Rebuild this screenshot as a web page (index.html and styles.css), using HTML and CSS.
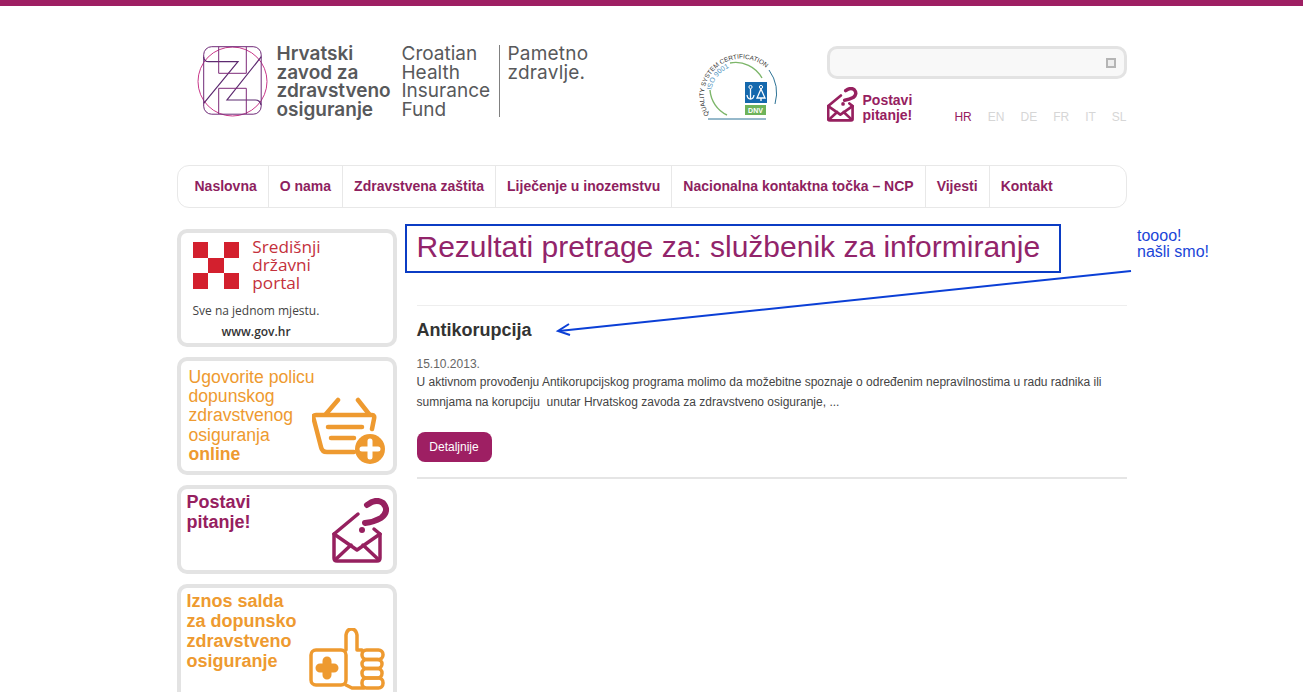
FILE: index.html
```html
<!DOCTYPE html>
<html lang="hr">
<head>
    <meta charset="UTF-8">
    <meta name="viewport" content="width=device-width, initial-scale=1.0">
    <title>Rezultati pretrage</title>
    <link rel="stylesheet" href="styles.css">
</head>
<body>
    <div class="topbar"></div>
    <div class="wrapper">
        <header class="header">
            <div class="logo">
                <svg class="logo-mark" width="72" height="76" viewBox="0 0 72 76" fill="none" stroke-width="1">
                    <circle cx="35.5" cy="36.5" r="34.5" stroke="#c9388a"/>
                    <rect x="6.7" y="1.7" width="57.5" height="67.5" rx="8" stroke="#6f2a78"/>
                    <path d="M6.7 11.7 Q7 16.7 11.7 16.7 H41 L6.7 58.3" stroke="#5d2a70" stroke-width="1.2"/>
                    <path d="M21.7 1.7 V28.3 H49.3 V1.7" stroke="#7d2a78"/>
                    <path d="M64.3 11.7 L30 55 H58.3 Q63 55 64 60" stroke="#5d2a70" stroke-width="1.2"/>
                    <path d="M21.7 69 V43.3 H49.3 V69" stroke="#7d2a78"/>
                </svg>
                <div class="logo-name">Hrvatski<br>zavod za<br>zdravstveno<br>osiguranje</div>
                <div class="logo-english">Croatian<br>Health<br>Insurance<br>Fund</div>
                <div class="logo-motto">Pametno<br>zdravlje.</div>
            </div>
            <svg class="cert" width="82" height="76" viewBox="0 0 82 76">
                <defs>
                    <path id="certArc" d="M12 67 A37.5 37.5 0 1 1 81 40"/>
                    <path id="isoArc" d="M14.5 42 A30 30 0 0 1 44 17"/>
                </defs>
                <text class="cert-text"><textPath href="#certArc">QUALITY SYSTEM CERTIFICATION</textPath></text>
                <text class="cert-iso"><textPath href="#isoArc">ISO 9001</textPath></text>
                <path d="M33 15 A30 30 0 0 1 65 30" fill="none" stroke="#7db66a" stroke-width="1.4"/>
                <path d="M13 42 A30 30 0 0 0 30 67" fill="none" stroke="#7db66a" stroke-width="1.4"/>
                <path d="M72 22 A40 40 0 0 1 78 56" fill="none" stroke="#2d7396" stroke-width="1"/>
                <rect x="48" y="34" width="22" height="21" fill="#1468ad"/>
                <circle cx="53.5" cy="39" r="1.6" fill="none" stroke="#fff"/>
                <path d="M53.5 41 V51 M50 47 Q50.5 51 53.5 51 Q56.5 51 57 47" fill="none" stroke="#fff" stroke-width="1.3"/>
                <circle cx="64" cy="39" r="1.6" fill="none" stroke="#fff"/>
                <path d="M64 41 L60 50 H68 Z M64 50 V53" fill="none" stroke="#fff" stroke-width="1.3"/>
                <rect x="48" y="57" width="21" height="10" fill="#6eb35a"/>
                <text class="cert-dnv" x="58.5" y="65">DNV</text>
                <path d="M11 71 H69" stroke="#2d7396" stroke-width="1"/>
            </svg>
            <div class="tools">
                <div class="search"><span class="search-btn"></span></div>
                <div class="tools-row">
                    <a class="ask">
                        <svg width="31" height="35" viewBox="0 0 58 66" fill="none" stroke="#96205f" stroke-width="5" stroke-linejoin="round" stroke-linecap="round">
                            <path d="M26 16 L2 36 V60 Q2 63 5 63 H45 Q48 63 48 60 V36 L42 31"/>
                            <path d="M2 36 L25 52 L48 36 M3 62 L19 47 M47 62 L31 47"/>
                            <path d="M35 7 Q44 0 51 5 Q58 13 49 20 Q42 24 33 25" stroke-width="6.5"/>
                            <circle cx="30" cy="32" r="3.5" fill="#96205f" stroke="none"/>
                        </svg>
                        <span>Postavi<br>pitanje!</span>
                    </a>
                    <ul class="langs">
                        <li class="active">HR</li>
                        <li>EN</li>
                        <li>DE</li>
                        <li>FR</li>
                        <li>IT</li>
                        <li>SL</li>
                    </ul>
                </div>
            </div>
        </header>

        <nav class="nav">
            <a>Naslovna</a>
            <a>O nama</a>
            <a>Zdravstvena zaštita</a>
            <a>Liječenje u inozemstvu</a>
            <a>Nacionalna kontaktna točka – NCP</a>
            <a>Vijesti</a>
            <a>Kontakt</a>
        </nav>

        <div class="content">
            <aside class="sidebar">
                <div class="banner banner-gov">
                    <div class="gov-top">
                        <div class="checker">
                            <span></span><i></i><span></span>
                            <i></i><span></span><i></i>
                            <span></span><i></i><span></span>
                        </div>
                        <div class="gov-name">Središnji<br>državni<br>portal</div>
                    </div>
                    <div class="gov-slogan">Sve na jednom mjestu.</div>
                    <div class="gov-url">www.gov.hr</div>
                </div>
                <div class="banner banner-policy">
                    <div class="banner-text orange">Ugovorite policu<br>dopunskog<br>zdravstvenog<br>osiguranja<br><b>online</b></div>
                    <svg class="banner-icon" width="73" height="68" viewBox="0 0 73 68" fill="none" stroke="#ee9a30" stroke-width="4.5" stroke-linecap="round" stroke-linejoin="round">
                        <path d="M4 18 H60 Q63 18 62 22 L60 32 M4 18 Q0 18 2 23 L9 50 Q10 55 15 55 H42"/>
                        <path d="M14 17 L26 3 M46 3 L57 17"/>
                        <path d="M16 30 H50 M19 41 H42"/>
                        <circle cx="58" cy="52" r="15" fill="#ee9a30" stroke="none"/>
                        <path d="M58 44 V60 M50 52 H66" stroke="#fff" stroke-width="5"/>
                    </svg>
                </div>
                <div class="banner banner-ask">
                    <div class="banner-text purple"><b>Postavi<br>pitanje!</b></div>
                    <svg class="banner-icon" width="58" height="66" viewBox="0 0 58 66" fill="none" stroke="#96205f" stroke-width="3.5" stroke-linejoin="round" stroke-linecap="round">
                        <path d="M26 16 L2 36 V60 Q2 63 5 63 H45 Q48 63 48 60 V36 L42 31"/>
                        <path d="M2 36 L25 52 L48 36 M3 62 L19 47 M47 62 L31 47"/>
                        <path d="M35 7 Q44 0 51 5 Q58 13 49 20 Q42 24 33 25" stroke-width="6"/>
                        <circle cx="30" cy="32" r="3" fill="#96205f" stroke="none"/>
                    </svg>
                </div>
                <div class="banner banner-saldo">
                    <div class="banner-text orange"><b>Iznos salda<br>za dopunsko<br>zdravstveno<br>osiguranje</b></div>
                    <svg class="banner-icon" width="78" height="64" viewBox="0 0 78 64" fill="none" stroke="#ee9a30" stroke-width="3.5" stroke-linejoin="round" stroke-linecap="round">
                        <rect x="2" y="22" width="35" height="35" rx="5"/>
                        <path d="M37 22 V7 Q38 1 42.5 1 Q47 1 48 7 V22 H53 M37 57 L43 60 H55"/>
                        <rect x="53" y="22" width="21" height="9.5" rx="4.5"/>
                        <rect x="53" y="31.5" width="20" height="9" rx="4.5"/>
                        <rect x="53" y="40.5" width="20" height="9.5" rx="4.5"/>
                        <rect x="53" y="50" width="21" height="10" rx="4.5"/>
                        <path d="M18 33 V47 M11 40 H25" stroke-width="9"/>
                    </svg>
                </div>
            </aside>

            <main class="main">
                <h1 class="page-title">Rezultati pretrage za: službenik za informiranje</h1>
                <article class="result">
                    <h2>Antikorupcija</h2>
                    <div class="date">15.10.2013.</div>
                    <p>U aktivnom provođenju Antikorupcijskog programa molimo da možebitne spoznaje o određenim nepravilnostima u radu radnika ili sumnjama na korupciju&nbsp; unutar Hrvatskog zavoda za zdravstveno osiguranje, ...</p>
                    <a class="btn">Detaljnije</a>
                </article>
            </main>
        </div>
    </div>

    <!-- oznake preko stranice -->
    <div class="note-box"></div>
    <div class="note-text">toooo!<br>našli smo!</div>
    <svg class="note-arrow" width="600" height="80" viewBox="0 0 600 80" fill="none" stroke="#0b3fd6" stroke-width="2">
        <path d="M576 3 L4 63"/>
        <path d="M14 56 L3 63 L15 67" stroke-width="2"/>
    </svg>
</body>
</html>
```

FILE: styles.css
```css
* {
    box-sizing: border-box;
}

html, body {
    height: 100%;
    overflow: hidden;
}

body {
    margin: 0;
    font-family: "Liberation Sans", Arial, sans-serif;
    color: #444;
    background: #fff;
    position: relative;
}

.topbar {
    height: 6px;
    background: #9e1f63;
}

.wrapper {
    width: 950px;
    margin: 0 auto;
}

.header {
    display: flex;
    height: 159px;
    position: relative;
}

.logo {
    display: flex;
    width: 520px;
    padding: 39px 0 0 20px;
    font-family: "Inter", sans-serif;
    font-size: 19px;
    line-height: 18.7px;
    color: #58595b;
}

.logo-mark {
    flex: none;
    margin-right: 8px;
}

.logo-name {
    width: 125px;
    font-weight: 600;
}

.logo-english {
    width: 98px;
    height: 72px;
    border-right: 1px solid #808080;
}

.logo-motto {
    padding-left: 8px;
    letter-spacing: 0.2px;
}

.cert {
    flex: none;
    margin-top: 42px;
    overflow: visible;
}

.cert-text {
    font-size: 6.4px;
    fill: #333;
}

.cert-iso {
    font-size: 7px;
    fill: #4a90c0;
}

.cert-dnv {
    font-size: 7px;
    font-weight: bold;
    fill: #fff;
    text-anchor: middle;
}

.tools {
    width: 300px;
    margin-left: 48px;
    padding-top: 40px;
}

.search {
    display: flex;
    align-items: center;
    justify-content: flex-end;
    height: 33px;
    padding-right: 8px;
    background: #f8f8f8;
    border: 3px solid #e3e3e3;
    border-radius: 10px;
}

.search-btn {
    width: 10px;
    height: 10px;
    border: 2px solid #b5b5b5;
    background: #eee;
}

.tools-row {
    display: flex;
    justify-content: space-between;
    margin-top: 8px;
}

.ask {
    display: flex;
    gap: 5px;
    font-size: 14px;
    font-weight: bold;
    line-height: 15px;
    color: #96205f;
}

.ask span {
    padding-top: 6px;
}

.langs {
    display: flex;
    list-style: none;
    margin: 23px 0 0 0;
    padding: 0;
    font-size: 12px;
    line-height: 14px;
    color: #d6d6d6;
}

.langs li {
    margin-left: 16px;
}

.langs .active {
    color: #96205f;
}

.nav {
    display: flex;
    align-items: stretch;
    height: 43px;
    padding-left: 6px;
    border: 1px solid #e8e8e8;
    border-radius: 12px;
}

.nav a {
    padding: 0 11px;
    border-right: 1px solid #e8e8e8;
    font-size: 14px;
    font-weight: bold;
    line-height: 41px;
    color: #8e1f5f;
}

.nav a:last-child {
    border-right: none;
}

.content {
    display: flex;
    gap: 20px;
    margin-top: 21px;
}

.sidebar {
    flex: none;
    width: 220px;
    display: flex;
    flex-direction: column;
    gap: 10px;
}

.banner {
    display: flex;
    border: 4px solid #e3e3e3;
    border-radius: 10px;
    background: #fff;
}

.banner-gov {
    display: block;
    height: 118px;
    padding: 9px 0 0 12px;
}

.gov-top {
    display: flex;
    gap: 13px;
}

.checker {
    display: grid;
    grid-template-columns: repeat(3, 15.6px);
    grid-template-rows: repeat(3, 15.6px);
}

.checker span {
    background: #d3202e;
}

.gov-name {
    font-family: "Open Sans", sans-serif;
    font-size: 17.2px;
    line-height: 18px;
    color: #c4313c;
    margin-top: -4px;
}

.gov-slogan {
    margin-top: 11px;
    font-family: "Open Sans", sans-serif;
    font-size: 12px;
    line-height: 16px;
    color: #444;
}

.gov-url {
    margin: 5px 0 0 29px;
    font-family: "Open Sans", sans-serif;
    font-size: 12px;
    font-weight: 600;
    line-height: 16px;
    color: #333;
}

.banner-text {
    flex: none;
    font-size: 17.6px;
    line-height: 19.2px;
}

.orange {
    color: #ee9a30;
}

.purple {
    color: #96205f;
}

.banner-icon {
    flex: none;
    margin-left: auto;
}

.banner-policy {
    height: 118px;
    padding: 7px 8px 5px 8px;
}

.banner-policy .banner-icon {
    align-self: flex-end;
    margin-bottom: 1px;
    margin-left: -3px;
}

.banner-ask {
    height: 89px;
    padding: 3px 3px 6px 6px;
}

.banner-ask .banner-text {
    font-size: 18px;
    line-height: 20px;
}

.banner-ask .banner-icon {
    align-self: flex-end;
}

.banner-saldo {
    height: 120px;
    padding: 3px 6px 0 6px;
}

.banner-saldo .banner-text {
    font-size: 18px;
    line-height: 20px;
}

.banner-saldo .banner-icon {
    margin-top: 37px;
}

.main {
    flex: 1;
    min-width: 0;
}

.page-title {
    margin: 0;
    padding-bottom: 40px;
    border-bottom: 1px solid #eee;
    font-size: 30px;
    font-weight: normal;
    line-height: 36px;
    color: #92246a;
}

.result {
    padding-bottom: 15px;
    border-bottom: 2px solid #e5e5e5;
}

.result h2 {
    margin: 14px 0 0;
    font-size: 18px;
    line-height: 20px;
    color: #333;
}

.date {
    margin-top: 15px;
    font-size: 12px;
    line-height: 18px;
    color: #666;
}

.result p {
    margin: -1px 0 0;
    font-size: 12px;
    line-height: 20px;
    color: #444;
}

.btn {
    display: inline-block;
    width: 75px;
    height: 30px;
    margin-top: 20px;
    background: #9e1f63;
    border-radius: 8px;
    font-size: 12px;
    line-height: 30px;
    text-align: center;
    color: #fff;
    vertical-align: top;
}

.note-box {
    position: absolute;
    left: 405px;
    top: 224px;
    width: 656px;
    height: 49px;
    border: 2px solid #0b3cc4;
}

.note-text {
    position: absolute;
    left: 1137px;
    top: 228px;
    font-size: 16px;
    line-height: 15.5px;
    color: #1a45d8;
}

.note-arrow {
    position: absolute;
    left: 555px;
    top: 268px;
}
```
